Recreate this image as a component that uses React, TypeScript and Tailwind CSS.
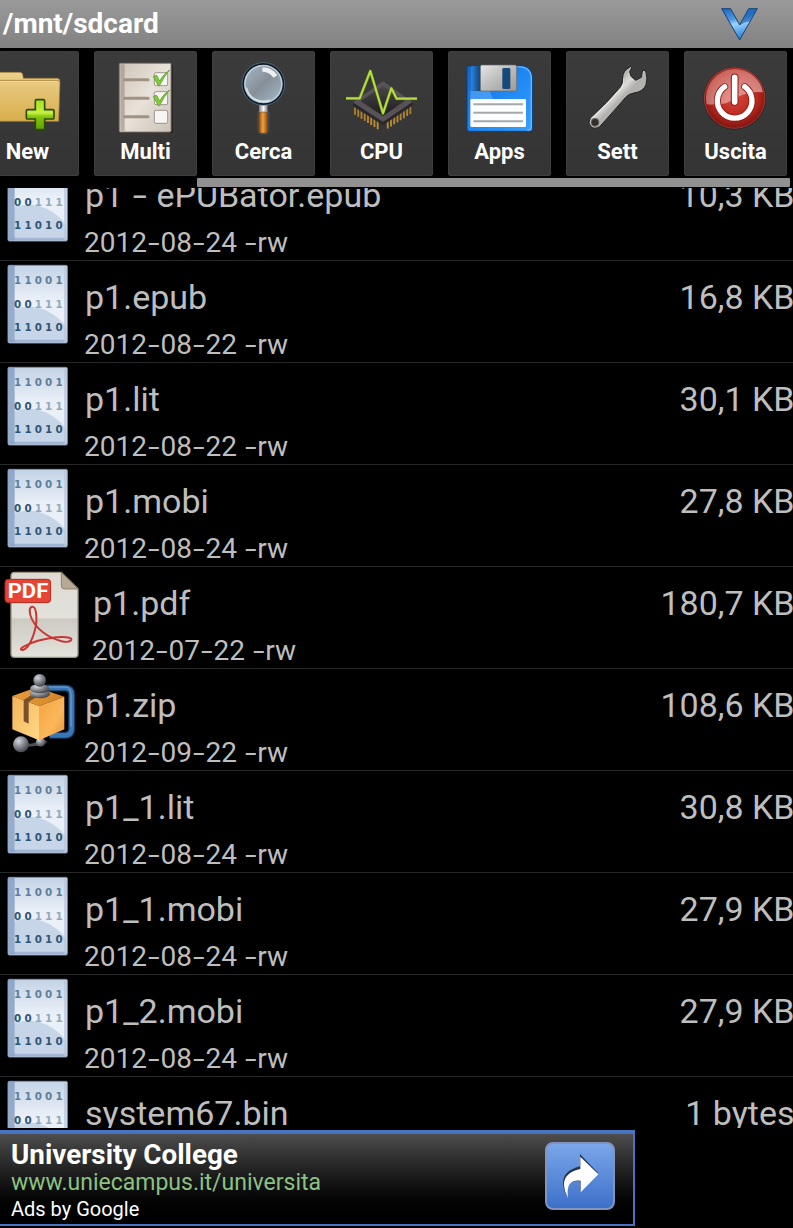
import React from "react";

type FileKind = "bin" | "pdf" | "zip";

interface FileEntry {
  name: string;
  date?: string;
  size: string;
  kind: FileKind;
}

const files: FileEntry[] = [
  { name: "p1 - ePUBator.epub", date: "2012-08-24 -rw", size: "10,3 KB", kind: "bin" },
  { name: "p1.epub", date: "2012-08-22 -rw", size: "16,8 KB", kind: "bin" },
  { name: "p1.lit", date: "2012-08-22 -rw", size: "30,1 KB", kind: "bin" },
  { name: "p1.mobi", date: "2012-08-24 -rw", size: "27,8 KB", kind: "bin" },
  { name: "p1.pdf", date: "2012-07-22 -rw", size: "180,7 KB", kind: "pdf" },
  { name: "p1.zip", date: "2012-09-22 -rw", size: "108,6 KB", kind: "zip" },
  { name: "p1_1.lit", date: "2012-08-24 -rw", size: "30,8 KB", kind: "bin" },
  { name: "p1_1.mobi", date: "2012-08-24 -rw", size: "27,9 KB", kind: "bin" },
  { name: "p1_2.mobi", date: "2012-08-24 -rw", size: "27,9 KB", kind: "bin" },
  { name: "system67.bin", size: "1 bytes", kind: "bin" },
];

// Gradients shared by all icons
const IconDefs = () => (
  <svg width="0" height="0" className="absolute">
    <defs>
      <linearGradient id="folder" x1="0" y1="0" x2="0" y2="1">
        <stop offset="0" stopColor="#ecd08c" />
        <stop offset="1" stopColor="#d9ae4c" />
      </linearGradient>
      <linearGradient id="plus" x1="0" y1="0" x2="0" y2="1">
        <stop offset="0" stopColor="#a8e01c" />
        <stop offset="0.45" stopColor="#c4f044" />
        <stop offset="0.55" stopColor="#86c80c" />
        <stop offset="1" stopColor="#62a004" />
      </linearGradient>
      <linearGradient id="paper" x1="0" y1="0" x2="1" y2="1">
        <stop offset="0" stopColor="#cfc5b9" />
        <stop offset="0.5" stopColor="#e8e2da" />
        <stop offset="1" stopColor="#cdc2b6" />
      </linearGradient>
      <linearGradient id="lens" x1="0" y1="0" x2="1" y2="1">
        <stop offset="0" stopColor="#a9bccb" />
        <stop offset="0.5" stopColor="#868f98" />
        <stop offset="1" stopColor="#a5c0cf" />
      </linearGradient>
      <linearGradient id="handle">
        <stop offset="0" stopColor="#8a4208" />
        <stop offset="0.45" stopColor="#f0a240" />
        <stop offset="1" stopColor="#8a4208" />
      </linearGradient>
      <linearGradient id="chrome">
        <stop offset="0" stopColor="#777" />
        <stop offset="0.5" stopColor="#fff" />
        <stop offset="1" stopColor="#777" />
      </linearGradient>
      <linearGradient id="pin" gradientUnits="userSpaceOnUse" x1="0" y1="155" x2="0" y2="238">
        <stop offset="0" stopColor="#a87418" />
        <stop offset="1" stopColor="#c09440" />
      </linearGradient>
      <linearGradient id="die" x1="0" y1="0" x2="0" y2="1">
        <stop offset="0" stopColor="#4a464a" />
        <stop offset="1" stopColor="#1e1c1e" />
      </linearGradient>
      <linearGradient id="floppy" x1="0" y1="0" x2="1" y2="1">
        <stop offset="0" stopColor="#1565c8" />
        <stop offset="0.5" stopColor="#1e88f4" />
        <stop offset="1" stopColor="#3ba0fa" />
      </linearGradient>
      <linearGradient id="slider">
        <stop offset="0" stopColor="#2a86e0" />
        <stop offset="1" stopColor="#123c6c" />
      </linearGradient>
      <linearGradient id="steel" x1="0" y1="0" x2="1" y2="1">
        <stop offset="0" stopColor="#e6e6e6" />
        <stop offset="0.5" stopColor="#bdbdbb" />
        <stop offset="1" stopColor="#999" />
      </linearGradient>
      <linearGradient id="wrench" gradientUnits="userSpaceOnUse" x1="115" y1="130" x2="145" y2="160">
        <stop offset="0" stopColor="#b8b6b3" />
        <stop offset="0.5" stopColor="#dddbd9" />
        <stop offset="1" stopColor="#b4b2af" />
      </linearGradient>
      <radialGradient id="power" cx="0.5" cy="0.45" r="0.55">
        <stop offset="0" stopColor="#d8493c" />
        <stop offset="0.7" stopColor="#b8261c" />
        <stop offset="1" stopColor="#7c1410" />
      </radialGradient>
      <linearGradient id="gloss" x1="0" y1="0" x2="1" y2="1">
        <stop offset="0" stopColor="#fff" stopOpacity="0.25" />
        <stop offset="1" stopColor="#fff" stopOpacity="0.5" />
      </linearGradient>
      <linearGradient id="sheet" x1="0" y1="0" x2="0" y2="1">
        <stop offset="0" stopColor="#c3d3e6" />
        <stop offset="0.45" stopColor="#eaf0f7" />
        <stop offset="1" stopColor="#e8f0fa" />
      </linearGradient>
      <linearGradient id="pdfPage" x1="0" y1="0" x2="0" y2="1">
        <stop offset="0" stopColor="#dddbd3" />
        <stop offset="0.53" stopColor="#e2e1da" />
        <stop offset="0.55" stopColor="#cccac1" />
        <stop offset="1" stopColor="#e4e3dc" />
      </linearGradient>
      <linearGradient id="boxTop" x1="0" y1="0" x2="1" y2="0">
        <stop offset="0" stopColor="#e89a3c" />
        <stop offset="1" stopColor="#d28428" />
      </linearGradient>
      <linearGradient id="boxLeft" x1="0" y1="0" x2="1" y2="1">
        <stop offset="0" stopColor="#f4b458" />
        <stop offset="1" stopColor="#ffd888" />
      </linearGradient>
      <linearGradient id="boxRight" x1="0" y1="0" x2="1" y2="1">
        <stop offset="0" stopColor="#f4a440" />
        <stop offset="0.6" stopColor="#fbb75c" />
        <stop offset="1" stopColor="#e89434" />
      </linearGradient>
      <radialGradient id="ball" cx="0.35" cy="0.3" r="0.8">
        <stop offset="0" stopColor="#d4d8de" />
        <stop offset="0.5" stopColor="#80848a" />
        <stop offset="1" stopColor="#34383c" />
      </radialGradient>
      <linearGradient id="vee" x1="0" y1="0" x2="0.3" y2="1">
        <stop offset="0" stopColor="#1c64b8" />
        <stop offset="0.4" stopColor="#4c9ae4" />
        <stop offset="0.55" stopColor="#9cd4fc" />
        <stop offset="1" stopColor="#2c80d8" />
      </linearGradient>
    </defs>
  </svg>
);

const NewIcon = () => (
  <>
    <path d="M50 72q0-8 8-8h71q6 0 8 6l2 12h100q10 0 10 10l-4 119H50z" fill="url(#folder)" stroke="#9c7a34" strokeWidth="2" />
    <path d="M50 88h188q10 0 10 7" fill="none" stroke="#b08c44" strokeWidth="3" />
    <path d="M50 92h192" stroke="#f4dfa8" strokeWidth="2" />
    <path
      d="M179 146h20q4 0 4 4v26h24q4 0 4 4v20q0 4-4 4h-24v28q0 4-4 4h-20q-4 0-4-4v-28h-23q-4 0-4-4v-20q0-4 4-4h23v-26q0-4 4-4z"
      fill="url(#plus)"
      stroke="#2c4c08"
      strokeWidth="5"
    />
  </>
);

const MultiIcon = () => (
  <>
    <rect x="76" y="40" width="157" height="206" rx="5" fill="#1f1d1b" />
    <rect x="73" y="37" width="155" height="206" rx="4" fill="url(#paper)" stroke="#8c8176" strokeWidth="3" />
    <rect x="76" y="40" width="13" height="200" fill="#a79b8e" opacity="0.75" />
    {[86, 142, 197].map((y) => (
      <path key={y} d={`M89 ${y}h70`} stroke="#a09383" strokeWidth="9" strokeLinecap="round" />
    ))}
    {[65, 122, 178].map((y) => (
      <rect key={y} x="178" y={y} width="40" height="39" rx="5" fill="#f7f5f2" stroke="#8d8781" strokeWidth="2.5" />
    ))}
    {[0, 60].map((dy) => (
      <path
        key={dy}
        transform={`translate(0 ${dy})`}
        d="M175 76l10-3 9 17q10-20 30-33-18 21-30 46h-5z"
        fill="#85cc3d"
        stroke="#4f8f22"
        strokeWidth="2"
      />
    ))}
  </>
);

const SearchIcon = () => (
  <>
    <rect x="132" y="175" width="38" height="76" rx="14" fill="#3c4b53" />
    <rect x="138" y="158" width="26" height="30" fill="url(#chrome)" />
    <rect x="137" y="183" width="28" height="64" rx="9" fill="url(#handle)" stroke="#5e381b" strokeWidth="1.5" />
    <circle cx="151" cy="99" r="61" fill="url(#lens)" stroke="#0c1a24" strokeWidth="6" />
    <circle cx="151" cy="99" r="64" fill="none" stroke="#668091" strokeWidth="2" />
    <circle cx="151" cy="99" r="55" fill="none" stroke="#bcd0dc" strokeWidth="4" />
    <path d="M101 112a52 52 0 0 0 68 36" fill="none" stroke="#e3edf2" strokeWidth="5" strokeLinecap="round" opacity="0.8" />
    <path d="M148 50q28-2 45 23l-11 7q-15-19-34-18z" fill="#fff" opacity="0.85" />
  </>
);

const CpuIcon = () => (
  <>
    {[0, 1, 2, 3, 4, 5, 6, 7].map((i) => (
      <g key={i} stroke="url(#pin)" strokeWidth="5.5">
        <path d={`M${72 + i * 9.7} ${160 + i * 6.2}l0.1 31`} />
        <path d={`M${238 - i * 9.7} ${158 + i * 6.2}l0.1 31`} />
      </g>
    ))}
    <path d="M66 155l90-64 88 62v11l-88 59-90-57z" fill="#2b282a" />
    <path d="M68 154l88-62 86 61-86 58z" fill="#565257" stroke="#68646a" strokeWidth="2" />
    <path d="M89 150l67-45 66 44-66 46z" fill="url(#die)" />
    <path d="M45 142h41l32-82 38 127 25-75 16 31h61" fill="none" stroke="#587b15" strokeWidth="10" opacity="0.6" strokeLinejoin="round" />
    <path d="M45 142h41l32-82 38 127 25-75 16 31h61" fill="none" stroke="#b5dc40" strokeWidth="6.5" strokeLinejoin="round" />
  </>
);

const AppsIcon = () => (
  <>
    <path d="M58 45h167q25 7 25 36v154q0 6-7 6H61q-7 0-7-7V49q0-4 4-4z" fill="url(#floppy)" stroke="#0c3f87" strokeWidth="3" />
    <path d="M205 47q42 0 42 36v145q0 9-12 9" fill="none" stroke="#69b9ff" strokeWidth="4" />
    <path d="M64 120h58l10 24H64z" fill="#65b2fc" opacity="0.55" />
    <rect x="66" y="45" width="30" height="75" rx="4" fill="url(#slider)" />
    <rect x="94" y="42" width="109" height="78" rx="5" fill="url(#steel)" stroke="#63676b" strokeWidth="2" />
    <rect x="160" y="51" width="24" height="63" rx="4" fill="#164979" />
    <rect x="64" y="144" width="167" height="84" rx="4" fill="#fbfdff" />
    {[160, 185, 211].map((y) => (
      <path key={y} d={`M73 ${y}h149`} stroke="#a5a9ad" strokeWidth="6" />
    ))}
  </>
);

const SettingsIcon = () => (
  <>
    <path
      d="M190 47Q166 60 167 82q1 15-7 26-38 46-90 93-8 15 1 25 11 11 27 1 46-51 77-87 10-12 26-14 28-4 36-25 6-20-1-41l-9-3-4 22-17 9-14-12-4-14 7-13z"
      fill="url(#wrench)"
      stroke="#22211f"
      strokeWidth="3"
    />
    <path d="M170 83q2 17-6 28Q134 148 76 202" fill="none" stroke="#efeeec" strokeWidth="3" opacity="0.6" />
    <circle cx="84" cy="214" r="12" fill="#33312f" stroke="#77736e" strokeWidth="3" />
  </>
);

const PowerIcon = () => (
  <>
    <circle cx="149" cy="142" r="94" fill="#242122" />
    <circle cx="149" cy="141" r="91" fill="url(#power)" stroke="#b5504b" strokeWidth="2" />
    <path d="M149 54a87 87 0 0 1 85 70Q184 116 124 157 95 162 65 160A87 87 0 0 1 149 54z" fill="url(#gloss)" />
    <path d="M119 107a52 52 0 1 0 60 0" fill="none" stroke="#8b1915" strokeWidth="21" strokeLinecap="round" />
    <path d="M149 79v74" stroke="#8b1915" strokeWidth="23" strokeLinecap="round" />
    <path d="M119 107a52 52 0 1 0 60 0" fill="none" stroke="#fff" strokeWidth="16" strokeLinecap="round" />
    <path d="M149 79v74" stroke="#fff" strokeWidth="17" strokeLinecap="round" />
  </>
);

const tools = [
  { label: "New", Icon: NewIcon },
  { label: "Multi", Icon: MultiIcon },
  { label: "Cerca", Icon: SearchIcon },
  { label: "CPU", Icon: CpuIcon },
  { label: "Apps", Icon: AppsIcon },
  { label: "Sett", Icon: SettingsIcon },
  { label: "Uscita", Icon: PowerIcon },
];

const BinaryIcon = () => (
  <svg viewBox="0 0 252 300" className="w-[84px] h-[100px] shrink-0">
    <rect x="24" y="13" width="178" height="233" rx="4" fill="url(#sheet)" stroke="#7890b4" strokeWidth="3" />
    <path d="M44 143q80-22 143 40 12 14 14 30v24H44z" fill="#c6d6e8" />
    <rect x="25" y="15" width="19" height="229" fill="#819bc0" opacity="0.8" />
    <path d="M27 236h173v8H27z" fill="#8fa5c7" opacity="0.8" />
    <path d="M192 17h8v226h-8z" fill="#b6c8e0" opacity="0.7" />
    <g fontFamily="'DejaVu Sans', sans-serif" fontSize="31" fontWeight="bold" textAnchor="middle">
      {["11001", "00111", "11010"].map((line, row) =>
        line.split("").map((digit, col) => (
          <text
            key={`${row}-${col}`}
            x={53 + col * 31}
            y={[70, 142, 210][row]}
            fill={row === 2 || (row === 1 && col < 2) ? "#315571" : row === 0 ? "#607e99" : "#93a8ba"}
          >
            {digit}
          </text>
        ))
      )}
    </g>
  </svg>
);

const PdfIcon = () => (
  <svg viewBox="0 0 276 300" className="w-[92px] h-[100px] shrink-0">
    <path d="M44 16h140l50 49v195q0 11-11 11H44q-11 0-11-11V27q0-11 11-11z" fill="url(#pdfPage)" stroke="#9d9381" strokeWidth="4" />
    <path d="M184 16l50 50h-40q-10 0-10-10z" fill="#b6a995" stroke="#746a5c" strokeWidth="2" />
    <rect x="15" y="37" width="137" height="70" rx="10" fill="#e64535" stroke="#a92b22" strokeWidth="3" />
    <text x="84" y="94" textAnchor="middle" textLength="122" lengthAdjust="spacingAndGlyphs" fontFamily="Roboto, sans-serif" fontSize="62" fontWeight="bold" fill="#fff">
      PDF
    </text>
    <path
      d="M98 119C86 119 87 138 96 157 113 190 148 212 185 223 214 229 221 215 208 212 180 206 118 216 85 232 62 242 57 249 68 249 92 243 112 182 109 147 108 133 106 119 98 119z"
      fill="none"
      stroke="#c93636"
      strokeWidth="6"
      strokeLinejoin="round"
    />
  </svg>
);

const ZipIcon = () => (
  <svg viewBox="0 0 252 300" className="w-[84px] h-[100px] shrink-0">
    <path d="M138 57h57q20 0 20 20v102q0 20-24 20h-42" fill="none" stroke="#17375f" strokeWidth="21" />
    <path d="M138 57h57q20 0 20 20v102q0 20-24 20h-42" fill="none" stroke="#3976b6" strokeWidth="14" />
    <path d="M138 54h57q18 0 18 23v96" fill="none" stroke="#75a5d4" strokeWidth="3" />
    <path d="M66 221q31 10 57-10l19 6q-9 16-28 13l-47 5z" fill="#4b5054" />
    <circle cx="122" cy="219" r="14" fill="url(#ball)" />
    <path d="M37 81l73-26 83 28-76 28z" fill="url(#boxTop)" />
    <path d="M37 81l80 30v103l-80-33z" fill="url(#boxLeft)" />
    <path d="M117 111l76-28v98l-76 33z" fill="url(#boxRight)" />
    <path d="M71 93l32-20 16 5-33 21v65l-15-7z" fill="#795029" />
    <ellipse cx="120" cy="74" rx="30" ry="14" fill="url(#ball)" />
    <ellipse cx="119" cy="59" rx="29" ry="14" fill="url(#ball)" />
    <circle cx="119" cy="34" r="19" fill="url(#ball)" />
    <circle cx="63" cy="226" r="24" fill="url(#ball)" />
  </svg>
);

const fileIcons: Record<FileKind, React.FC> = {
  bin: BinaryIcon,
  pdf: PdfIcon,
  zip: ZipIcon,
};

// Hyphens are drawn wider than the font's own
const WideHyphenText = ({ text }: { text: string }) => (
  <>
    {text.split("").map((ch, i) =>
      ch === "-" ? (
        <span key={i} className="inline-block w-[0.48em] text-center">
          <span className="inline-block scale-x-150">-</span>
        </span>
      ) : (
        ch
      )
    )}
  </>
);

const FileRow = ({ file }: { file: FileEntry }) => {
  const Icon = fileIcons[file.kind];
  return (
    <div className="flex h-[102px] shrink-0 border-b border-[#282828] text-[#bebebe] whitespace-pre">
      <Icon />
      <div className="flex-1 pt-3">
        <div className="flex justify-between text-[34px] leading-[48px]">
          <span className="pl-px">
            <WideHyphenText text={file.name} />
          </span>
          <span className="-mr-[1.5px]">{file.size}</span>
        </div>
        {file.date && (
          <div className="mt-2 text-[28px] leading-8">
            <WideHyphenText text={file.date} />
          </div>
        )}
      </div>
    </div>
  );
};

export default function App() {
  return (
    <div className="flex h-[1228px] w-[793px] flex-col overflow-hidden bg-black font-[Roboto,sans-serif]">
      <IconDefs />
      <header className="flex h-12 shrink-0 items-start justify-between bg-linear-to-b from-[#9a9a9a] to-[#828282] pl-[3px] pr-[35px] pt-2">
        <h1 className="text-[28px] font-bold leading-8 text-white">/mnt/sdcard</h1>
        <svg viewBox="0 0 111 99" className="h-[33px] w-[37px]">
          <path d="M2 2h27l27 49L83 2h26L56 96z" fill="url(#vee)" stroke="#184072" strokeWidth="3" />
          <path d="M56 51L83 2h26L87 40q-16 2-31 11z" fill="#1457ac" opacity="0.65" />
        </svg>
      </header>

      <nav className="-ml-6 flex shrink-0 gap-4 pt-[3px]">
        {tools.map(({ label, Icon }) => (
          <button
            key={label}
            className="flex h-[125px] w-[103px] -mr-px shrink-0 flex-col items-center rounded-[2px] border border-[#3f3f3f] bg-linear-to-b from-[#3b3b3b] to-[#343434]"
          >
            <svg viewBox="0 0 306 252" className="-mt-px h-[84px] w-[102px] shrink-0">
              <Icon />
            </svg>
            <span className="mt-px text-[22px] font-bold leading-8 text-white">{label}</span>
          </button>
        ))}
      </nav>
      <div className="mb-px ml-[197px] mt-0.5 h-[9px] w-[593px] shrink-0 rounded-[1px] bg-[#919191]" />

      <main className="h-[940px] shrink-0 overflow-hidden">
        <div className="-mt-[29px] flex flex-col">
          {files.map((file) => (
            <FileRow key={file.name} file={file} />
          ))}
        </div>
      </main>

      <footer className="mt-0.5 flex h-24 w-[635px] shrink-0 justify-between border-b-2 border-r-2 border-t-4 border-[#4674c1] bg-linear-to-b from-[#4d4d4d] to-black pl-[11px] pr-[18px]">
        <div className="whitespace-nowrap">
          <div className="mt-[5px] text-[27.8px] font-bold leading-8 text-white">University College</div>
          <div className="text-[23px] leading-6 text-[#8cc183]">www.uniecampus.it/universita</div>
          <div className="text-[20px] leading-[29px] text-white">Ads by Google</div>
        </div>
        <button className="mt-2 flex h-[68px] w-[70px] items-center justify-center rounded-lg border-2 border-[#8293be] bg-linear-to-b from-[#7ba6e9] to-[#3c70c8]">
          <svg viewBox="0 0 114 132" className="h-11 w-[38px]">
            <path d="M18 127Q-18 56 57 37V0l54 57-53 54V82Q15 74 18 127z" fill="#23344f" />
            <path d="M21 132Q-15 61 58 45V8l54 53-53 54V80Q13 74 21 132z" fill="#fff" />
          </svg>
        </button>
      </footer>
    </div>
  );
}
